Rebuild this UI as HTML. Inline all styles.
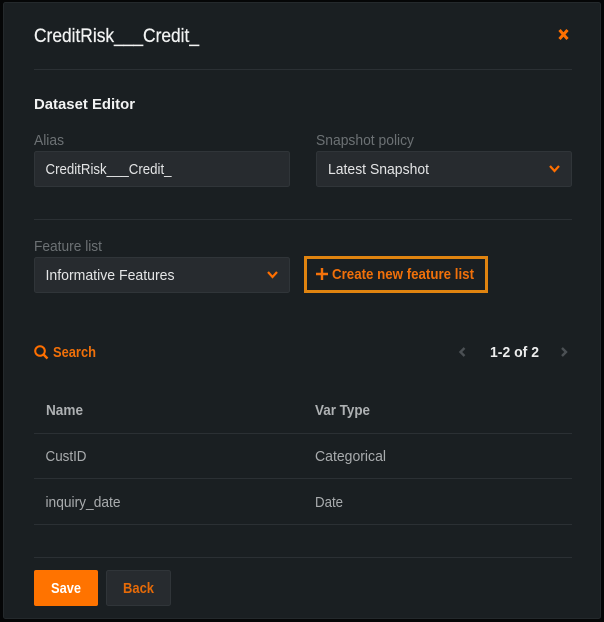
<!DOCTYPE html>
<html>
<head>
<meta charset="utf-8">
<style>
html,body{margin:0;padding:0;background:#000;width:604px;height:622px;overflow:hidden}
svg{display:block}
text{font-family:"Liberation Sans",sans-serif;font-size:15px}
.b{font-weight:700}
</style>
</head>
<body>
<svg width="604" height="622" viewBox="0 0 604 622" xmlns="http://www.w3.org/2000/svg">
<rect x="0" y="0" width="604" height="622" fill="#050607"/>
<rect x="3.5" y="2.5" width="597" height="616" rx="2" fill="#1a1f22" stroke="#24292c"/>
<g fill="#2b3034">
<rect x="34" y="69" width="538" height="1"/>
<rect x="34" y="219" width="538" height="1"/>
<rect x="34" y="433" width="538" height="1"/>
<rect x="34" y="478" width="538" height="1"/>
<rect x="34" y="524" width="538" height="1"/>
<rect x="34" y="557" width="538" height="1"/>
</g>
<text x="34" y="42" style="font-size:19px" fill="#f2f3f3" stroke="#f2f3f3" stroke-width="0.25" textLength="165" lengthAdjust="spacingAndGlyphs">CreditRisk___Credit_</text>
<path d="M559.5 30 L567.5 39 M567.5 30 L559.5 39" stroke="#ff6f00" stroke-width="3" fill="none"/>
<text x="34" y="109" class="b" fill="#f2f3f3" textLength="101" lengthAdjust="spacingAndGlyphs">Dataset Editor</text>
<text x="34" y="145" fill="#6c7174" textLength="30" lengthAdjust="spacingAndGlyphs">Alias</text>
<text x="316" y="145" fill="#6c7174" textLength="98" lengthAdjust="spacingAndGlyphs">Snapshot policy</text>
<rect x="34.5" y="151.5" width="255" height="35" rx="2" fill="#272b2f" stroke="#303539"/>
<text x="45.5" y="174" fill="#e4e5e6" textLength="126" lengthAdjust="spacingAndGlyphs">CreditRisk___Credit_</text>
<rect x="316.5" y="151.5" width="255" height="35" rx="2" fill="#272b2f" stroke="#303539"/>
<text x="328" y="174" fill="#e4e5e6" textLength="101" lengthAdjust="spacingAndGlyphs">Latest Snapshot</text>
<path d="M550 166 L554.5 171 L559 166" stroke="#ff6f00" stroke-width="2.2" fill="none"/>
<text x="34" y="251" fill="#6c7174" textLength="68" lengthAdjust="spacingAndGlyphs">Feature list</text>
<rect x="34.5" y="257.5" width="255" height="35" rx="2" fill="#272b2f" stroke="#303539"/>
<text x="45.5" y="280" fill="#e4e5e6" textLength="129" lengthAdjust="spacingAndGlyphs">Informative Features</text>
<path d="M268 272 L272.5 277 L277 272" stroke="#ff6f00" stroke-width="2.2" fill="none"/>
<rect x="305.5" y="257.5" width="181" height="34" fill="#1a1f22" stroke="#e08410" stroke-width="3"/>
<path d="M322 268 V280 M316 274 H328" stroke="#f5720a" stroke-width="2.4" fill="none"/>
<text x="332" y="279" class="b" fill="#f0700a" textLength="142" lengthAdjust="spacingAndGlyphs">Create new feature list</text>
<circle cx="40" cy="351" r="4.8" stroke="#ff6f00" stroke-width="2" fill="none"/>
<path d="M43.5 354.5 L47.5 358.5" stroke="#ff6f00" stroke-width="2.4" fill="none"/>
<text x="53" y="357" class="b" fill="#f0700a" textLength="43" lengthAdjust="spacingAndGlyphs">Search</text>
<path d="M464.5 348 L460.5 352 L464.5 356" stroke="#4b5054" stroke-width="2.4" fill="none"/>
<text x="490" y="357" class="b" fill="#eceded" textLength="49" lengthAdjust="spacingAndGlyphs">1-2 of 2</text>
<path d="M562 348 L566 352 L562 356" stroke="#4b5054" stroke-width="2.4" fill="none"/>
<text x="46" y="415" class="b" fill="#aeb1b3" textLength="37" lengthAdjust="spacingAndGlyphs">Name</text>
<text x="315" y="415" class="b" fill="#aeb1b3" textLength="55" lengthAdjust="spacingAndGlyphs">Var Type</text>
<text x="45.5" y="461" fill="#a9acae" textLength="41" lengthAdjust="spacingAndGlyphs">CustID</text>
<text x="315" y="461" fill="#a9acae" textLength="71" lengthAdjust="spacingAndGlyphs">Categorical</text>
<text x="45.5" y="507" fill="#a9acae" textLength="75" lengthAdjust="spacingAndGlyphs">inquiry_date</text>
<text x="315" y="507" fill="#a9acae" textLength="28" lengthAdjust="spacingAndGlyphs">Date</text>
<rect x="34" y="570" width="64" height="36" rx="2" fill="#ff7300"/>
<text x="51" y="593" class="b" fill="#ffffff" textLength="30" lengthAdjust="spacingAndGlyphs">Save</text>
<rect x="106.5" y="570.5" width="64" height="35" rx="2" fill="#272b2f" stroke="#303539"/>
<text x="123" y="593" class="b" fill="#e56a08" textLength="31" lengthAdjust="spacingAndGlyphs">Back</text>
</svg>
</body>
</html>
